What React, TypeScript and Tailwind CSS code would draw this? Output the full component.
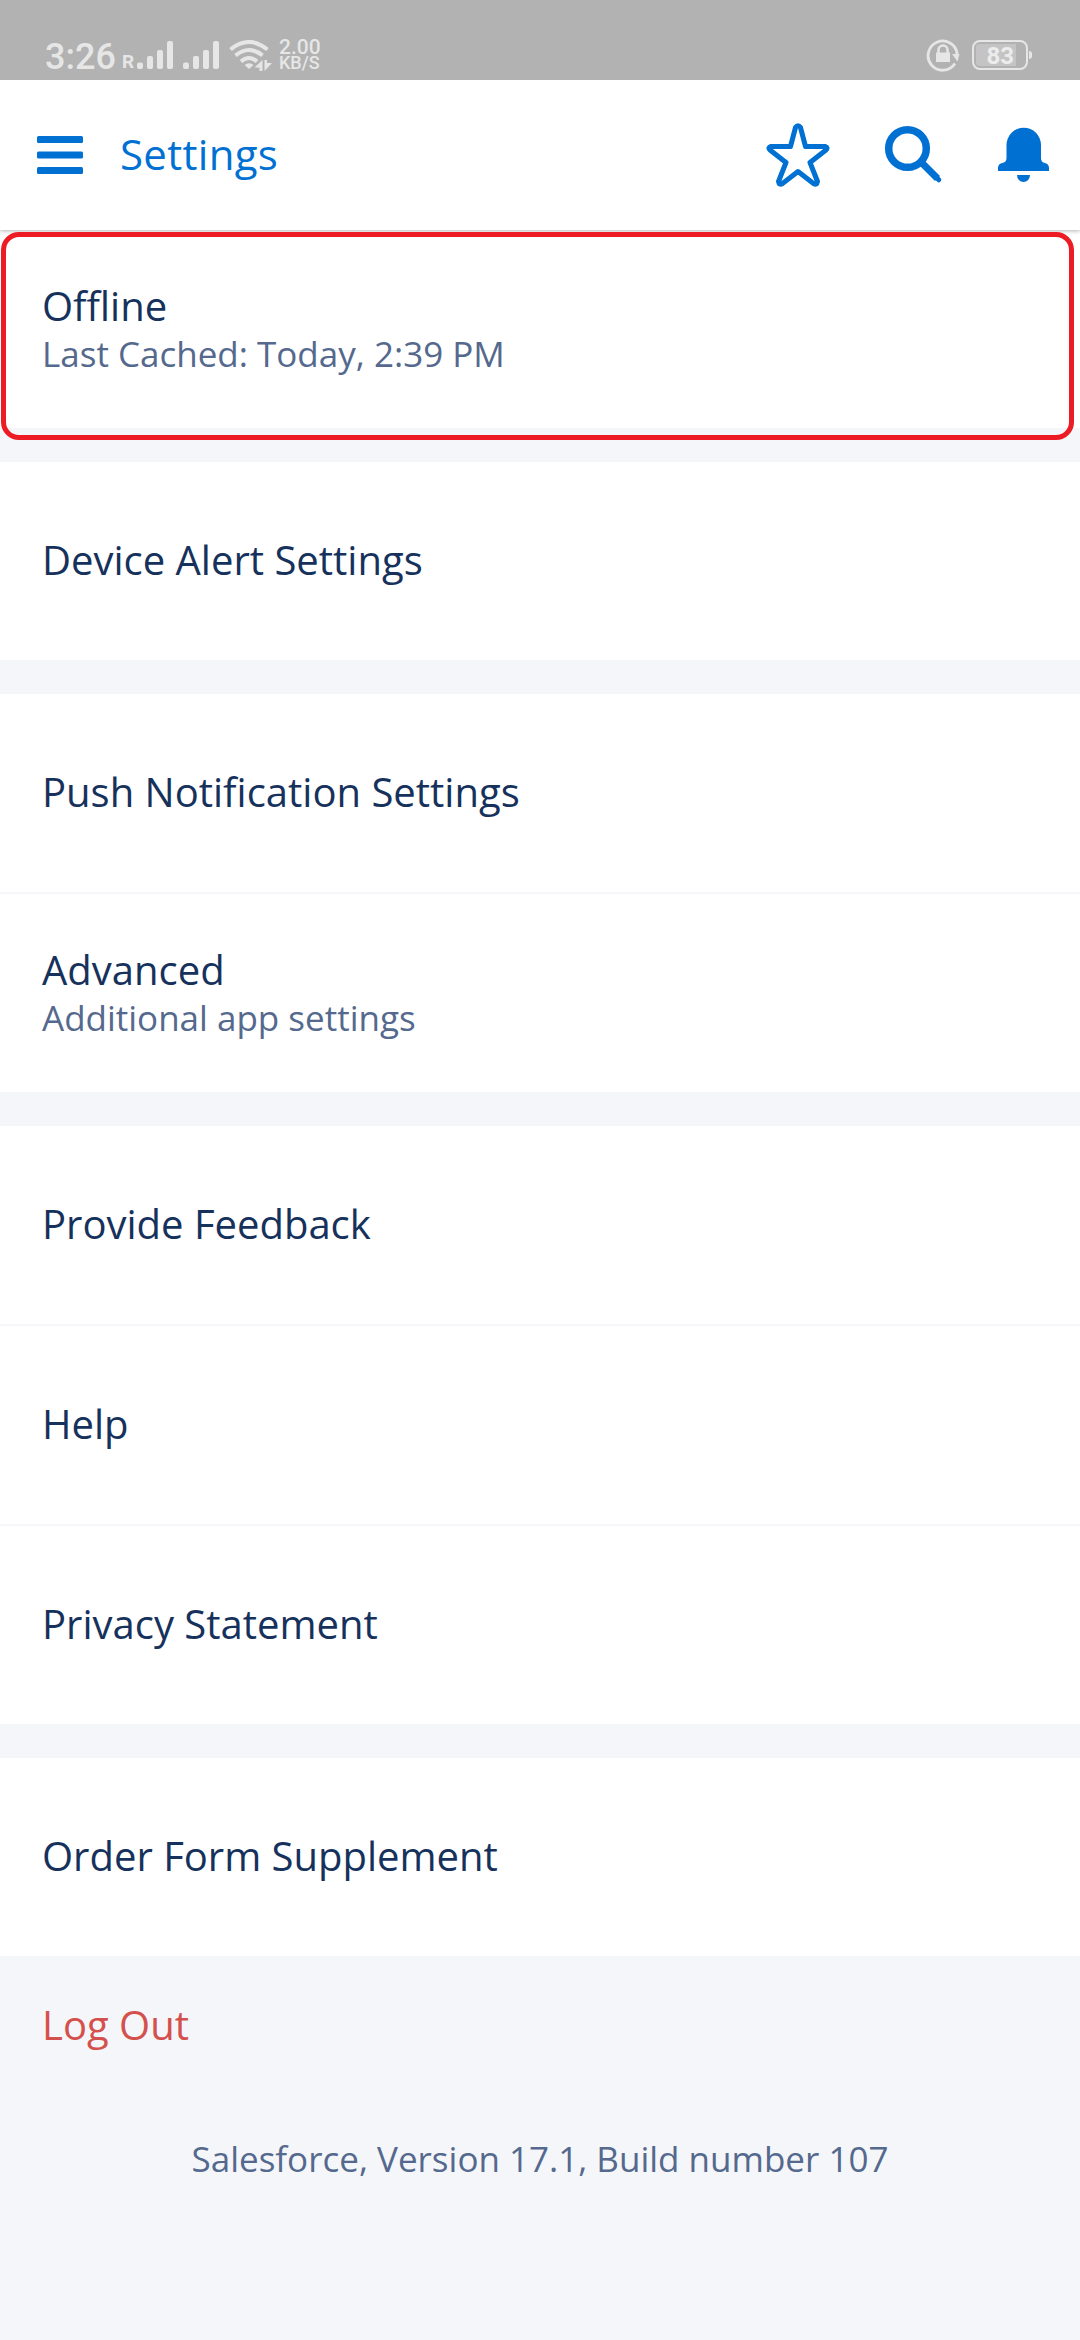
import React from 'react';

type Item = { label: string; detail?: string };

const groups: Item[][] = [
    [{ label: 'Offline', detail: 'Last Cached: Today, 2:39 PM' }],
    [{ label: 'Device Alert Settings' }],
    [{ label: 'Push Notification Settings' }, { label: 'Advanced', detail: 'Additional app settings' }],
    [{ label: 'Provide Feedback' }, { label: 'Help' }, { label: 'Privacy Statement' }],
    [{ label: 'Order Form Supplement' }],
];

const Signal = () => (
    <svg width="36" height="28" viewBox="0 0 36 28" fill="#e6e6e6">
        <rect x="0" y="21.5" width="6" height="6.5" rx="2" />
        <rect x="10" y="15" width="6" height="13" rx="2" />
        <rect x="20" y="9" width="6" height="19" rx="2" />
        <rect x="30" y="0" width="6" height="28" rx="2" />
    </svg>
);

const Wifi = () => (
    <svg width="43" height="32" viewBox="229 40 43 32" fill="none" stroke="#e6e6e6" strokeWidth="4">
        <path d="M230.500 49.500 Q249 34.500 267.500 49.500" />
        <path d="M235.500 55.500 Q249 44.500 262.500 55.500" />
        <path d="M241 61.500 Q249 54.500 257 61.500" />
        <path d="M244.500 65 Q249 61.500 253.500 65 L249 69 Z" fill="#e6e6e6" stroke="none" />
        <path d="M262.500 60 V71 H259.500 V67.500 H254.500 Z M264.500 60 V71 L272 63 H267 V60 Z" fill="#e6e6e6" stroke="none" />
    </svg>
);

const StatusBar = () => (
    <div className="relative z-20 flex h-20 bg-[#b2b2b2] font-[Roboto] text-[#e6e6e6]">
        <span className="ml-[45px] mt-[36px] w-[77px] text-[36px] leading-[42px] font-medium whitespace-nowrap">3:26</span>
        <span className="mt-[52px] w-[15px] text-[19px] leading-5 font-bold">R</span>
        <div className="mt-[41px] flex h-7 gap-[10px]">
            <Signal />
            <Signal />
        </div>
        <div className="ml-[10px] mt-[40px]"><Wifi /></div>
        <div className="ml-[7px] mt-[39px] w-12 whitespace-nowrap font-medium">
            <div className="text-[21px] leading-[16px]">2.00</div>
            <div className="text-[18px] leading-[15px]">KB/S</div>
        </div>
        <svg className="ml-auto mt-[38px]" width="34" height="34" viewBox="926 38 34 34" fill="none" stroke="#e6e6e6">
            <path d="M957.200 54 A14.600 14.600 0 1 0 955 63.500" strokeWidth="2.800" />
            <path d="M952 54 H959.500 L957.500 61.500 Z" fill="#e6e6e6" stroke="none" />
            <rect x="936" y="52.500" width="14" height="9.500" fill="#e6e6e6" stroke="none" />
            <path d="M938.500 53 V50 A4.500 4.500 0 0 1 947.500 50 V53" strokeWidth="2.500" />
        </svg>
        <div className="ml-[12px] mt-[40px] flex h-[30px] w-[56px] rounded-[8px] border-2 border-[#e6e6e6] p-[2px]">
            <div className="flex h-[22px] w-[40px] items-center justify-end rounded-l-[4px] bg-[#c4c4c4] pr-[2px] pt-[1px] text-[24px] leading-[22px] font-bold text-[#ececec]">83</div>
        </div>
        <div className="ml-[1px] mr-[48px] mt-[51px] h-2 w-[3px] rounded-r bg-[#e6e6e6]" />
    </div>
);

const Header = () => (
    <header className="relative z-10 flex h-[150px] items-center bg-white text-[#0070d2] shadow-[0_1px_4px_rgba(0,0,0,0.3)]">
        <svg className="ml-[37px]" width="46" height="38" viewBox="0 0 46 38" fill="currentColor">
            <rect width="46" height="7" rx="1.500" />
            <rect y="15.500" width="46" height="7" rx="1.500" />
            <rect y="31" width="46" height="7" rx="1.500" />
        </svg>
        <h1 className="ml-[37px] pb-[2px] text-[42px] leading-[58px] tracking-[0.3px]">Settings</h1>
        <svg className="ml-auto" width="64" height="66" viewBox="766 122 64 66" fill="none" stroke="currentColor" strokeWidth="5" strokeLinejoin="round">
            <path d="M795.500 127.500 Q798 123.800 800.500 127.500 L805.500 146.500 H825 Q828.500 147.500 826 150 L810 162.500 L817.500 181.500 Q817 185.500 813.500 183.500 L798 171.500 L782.500 183.500 Q779 185.500 778.500 181.500 L786 162.500 L770 150 Q767.500 147.500 771 146.500 H790.500 Z" />
        </svg>
        <svg className="ml-[54px]" width="60" height="60" viewBox="884 125 60 60" fill="none" stroke="currentColor">
            <circle cx="907.500" cy="148.500" r="18.800" strokeWidth="7.500" />
            <path d="M921.500 162.500 L937.500 178.500" strokeWidth="7" />
            <path d="M936 177 L938.800 179.800" strokeWidth="5" strokeLinecap="round" />
        </svg>
        <svg className="ml-[52px] mr-[28px]" width="56" height="58" viewBox="996 126 56 58" fill="currentColor">
            <path d="M1006.500 145 A17 17 0 0 1 1041 145 V158 Q1041 162.500 1045 163 Q1049 164 1049 168 V171 H998 V168 Q998 164 1002 163 Q1006.500 162.500 1006.500 158 Z" />
            <path d="M1017 175 H1030 A6.500 7 0 0 1 1017 175 Z" />
        </svg>
    </header>
);

const Row = ({ label, detail }: Item) => {
    if (!detail) {
        return (
            <div className="flex h-[198px] items-center bg-white px-[42px] pb-[2px] text-[40px] leading-[54px] text-[#16325c]">{label}</div>
        );
    }
    return (
        <div className="flex h-[198px] flex-col justify-center bg-white px-[42px] pt-[2px]">
            <div className="text-[40px] leading-[48px] text-[#16325c]">{label}</div>
            <div className="text-[35px] leading-[48px] text-[#54698d]">{detail}</div>
        </div>
    );
};

const App = () => {
    return (
        <div className="h-[2340px] w-[1080px] overflow-hidden bg-[#f4f6f9] font-['Open_Sans',sans-serif]">
            <StatusBar />
            <Header />
            <main className="relative">
                <div className="flex flex-col gap-[34px]">
                    {groups.map((items, i) => (
                        <div key={i} className="flex flex-col gap-[2px]">
                            {items.map((item) => <Row key={item.label} {...item} />)}
                        </div>
                    ))}
                </div>
                {/* highlight around the Offline row */}
                <div className="absolute left-[1px] top-[2px] z-20 h-[208px] w-[1073px] rounded-[18px] border-[5px] border-[#ed1c24]" />
                <div className="mt-[42px] px-[42px] text-[40px] leading-[54px] text-[#d4504c]">Log Out</div>
                <div className="mt-[83px] text-center text-[35px] leading-[48px] text-[#54698d]">Salesforce, Version 17.1, Build number 107</div>
            </main>
        </div>
    );
};

export default App;
